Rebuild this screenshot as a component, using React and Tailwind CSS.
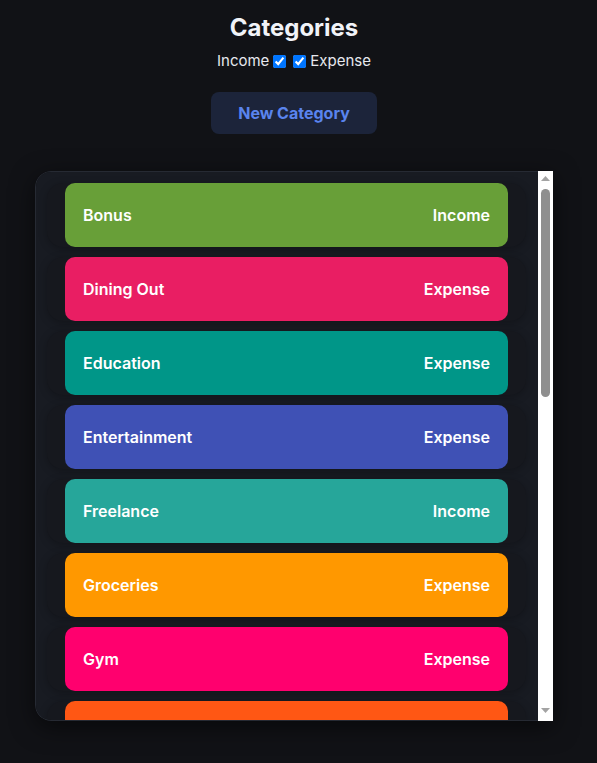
import { useState } from "react";

const categories = [
  { name: "Bonus", type: "Income", color: "bg-[#689f38]" },
  { name: "Dining Out", type: "Expense", color: "bg-[#e91e63]" },
  { name: "Education", type: "Expense", color: "bg-[#009688]" },
  { name: "Entertainment", type: "Expense", color: "bg-[#3f51b5]" },
  { name: "Freelance", type: "Income", color: "bg-[#26a69a]" },
  { name: "Groceries", type: "Expense", color: "bg-[#ff9800]" },
  { name: "Gym", type: "Expense", color: "bg-[#ff006e]" },
  { name: "Healthcare", type: "Expense", color: "bg-[#ff5714]" },
  { name: "Insurance", type: "Expense", color: "bg-[#795548]" },
  { name: "Investments", type: "Income", color: "bg-[#4caf50]" },
  { name: "Rent", type: "Expense", color: "bg-[#9c27b0]" },
  { name: "Salary", type: "Income", color: "bg-[#2196f3]" },
  { name: "Shopping", type: "Expense", color: "bg-[#f44336]" },
  { name: "Side Hustle", type: "Income", color: "bg-[#8bc34a]" },
  { name: "Subscriptions", type: "Expense", color: "bg-[#673ab7]" },
  { name: "Transportation", type: "Expense", color: "bg-[#607d8b]" },
  { name: "Travel", type: "Expense", color: "bg-[#00bcd4]" },
  { name: "Utilities", type: "Expense", color: "bg-[#ffc107]" },
];

// classic light scrollbar, drawn since headless chrome hides the native one
const FakeScrollbar = () => (
  <div className="w-[15px] shrink-0 bg-white flex flex-col items-center">
    <svg width="9" height="6" viewBox="0 0 9 6" className="mt-[5px]">
      <polygon points="4.5,0 9,5 0,5" fill="#a3a3a3" />
    </svg>
    <div className="mt-[7px] w-[9px] h-[208px] rounded-full bg-[#8f8f8f]" />
    <div className="flex-1" />
    <svg width="9" height="6" viewBox="0 0 9 6" className="mb-[7px]">
      <polygon points="0,0 9,0 4.5,5" fill="#a3a3a3" />
    </svg>
  </div>
);

const App = () => {
  const [income, setIncome] = useState(true);
  const [expense, setExpense] = useState(true);

  const shown = categories.filter(
    (c) => (c.type === "Income" && income) || (c.type === "Expense" && expense)
  );

  return (
    <div
      className="min-h-screen bg-[#111216] text-white"
      style={{ fontFamily: "Inter, 'Noto Sans', sans-serif" }}
    >
      <div className="w-[588px] flex flex-col items-center pt-[12px]">
        <h1 className="text-[24px] leading-[32px] font-bold text-[#f1f3f8]">Categories</h1>
        <div className="mt-[7px] flex items-center text-[15px] leading-[20px] text-[#e6e8ee]">
          <label className="flex items-center">
            Income
            <input
              type="checkbox"
              checked={income}
              onChange={(e) => setIncome(e.target.checked)}
              className="ml-[4px] mr-[1px] w-[13px] h-[13px] accent-[#0075ff]"
            />
          </label>
          <label className="flex items-center ml-[6px]">
            <input
              type="checkbox"
              checked={expense}
              onChange={(e) => setExpense(e.target.checked)}
              className="mr-[4px] w-[13px] h-[13px] accent-[#0075ff]"
            />
            Expense
          </label>
        </div>
        <button className="mt-[21px] w-[166px] h-[42px] rounded-lg bg-[#1c243a] text-[#5a84ee] text-[16px] font-bold">
          New Category
        </button>
        <div className="mt-[37px] w-[518px] h-[550px] flex rounded-l-2xl overflow-hidden shadow-[0_6px_24px_rgba(0,0,0,0.55)]">
          <div className="flex-1 border-l border-y border-[#262a33] rounded-l-2xl bg-[#181b22] overflow-y-auto [scrollbar-width:none]">
            <div className="flex flex-col gap-[10px] pt-[11px] pb-[12px] pl-[11px] pr-[12px]">
              {shown.map((c) => (
                <div
                  key={c.name}
                  className="px-[18px] rounded-[16px] bg-[#16181e] shadow-[0_2px_8px_rgba(0,0,0,0.25)]"
                >
                  <div
                    className={`${c.color} h-[64px] rounded-[10px] px-[18px] flex items-center justify-between text-[16px] font-semibold text-white`}
                  >
                    <span>{c.name}</span>
                    <span>{c.type}</span>
                  </div>
                </div>
              ))}
            </div>
          </div>
          <FakeScrollbar />
        </div>
      </div>
    </div>
  );
};

export default App;
